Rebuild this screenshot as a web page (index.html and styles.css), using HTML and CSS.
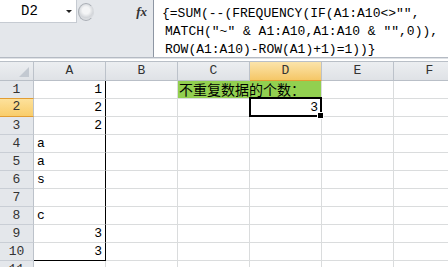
FILE: index.html
```html
<!DOCTYPE html>
<html lang="zh-CN">
<head>
    <meta charset="UTF-8">
    <title>不重复数据的个数</title>
    <link rel="stylesheet" href="styles.css">
</head>
<body>

    <div class="formula-bar">
        <div class="name-area">
            <div class="name-top">
                <div class="name-box">
                    <span class="name">D2</span>
                    <span class="arrow"></span>
                </div>
                <div class="knob"></div>
                <span class="fx">fx</span>
            </div>
        </div>
        <div class="formula">
            <div class="f-line first">{=SUM(--(FREQUENCY(IF(A1:A10&lt;&gt;"",</div>
            <div class="f-line">MATCH("~" &amp; A1:A10,A1:A10 &amp; "",0)),</div>
            <div class="f-line">ROW(A1:A10)-ROW(A1)+1)=1))}</div>
        </div>
    </div>
    <div class="strip"></div>

    <div class="sheet">
        <!-- 列标题 -->
        <div class="ch corner"><span class="tri"></span></div>
        <div class="ch">A</div>
        <div class="ch">B</div>
        <div class="ch">C</div>
        <div class="ch active">D</div>
        <div class="ch">E</div>
        <div class="ch">F</div>

        <div class="rh">1</div>
        <div class="c num edge">1</div>
        <div class="c"></div>
        <div class="c green">不重复数据的个数：</div>
        <div class="c"></div>
        <div class="c"></div>

        <div class="rh active">2</div>
        <div class="c num edge">2</div>
        <div class="c"></div>
        <div class="c"></div>
        <div class="c num current">3<span class="sel"><span class="handle"></span></span></div>
        <div class="c"></div>
        <div class="c"></div>

        <div class="rh">3</div>
        <div class="c num edge">2</div>
        <div class="c"></div>
        <div class="c"></div>
        <div class="c"></div>
        <div class="c"></div>
        <div class="c"></div>

        <div class="rh">4</div>
        <div class="c edge">a</div>
        <div class="c"></div>
        <div class="c"></div>
        <div class="c"></div>
        <div class="c"></div>
        <div class="c"></div>

        <div class="rh">5</div>
        <div class="c edge">a</div>
        <div class="c"></div>
        <div class="c"></div>
        <div class="c"></div>
        <div class="c"></div>
        <div class="c"></div>

        <div class="rh">6</div>
        <div class="c edge">s</div>
        <div class="c"></div>
        <div class="c"></div>
        <div class="c"></div>
        <div class="c"></div>
        <div class="c"></div>

        <div class="rh">7</div>
        <div class="c edge"></div>
        <div class="c"></div>
        <div class="c"></div>
        <div class="c"></div>
        <div class="c"></div>
        <div class="c"></div>

        <div class="rh">8</div>
        <div class="c edge">c</div>
        <div class="c"></div>
        <div class="c"></div>
        <div class="c"></div>
        <div class="c"></div>
        <div class="c"></div>

        <div class="rh">9</div>
        <div class="c num edge">3</div>
        <div class="c"></div>
        <div class="c"></div>
        <div class="c"></div>
        <div class="c"></div>
        <div class="c"></div>

        <div class="rh">10</div>
        <div class="c num edge last">3</div>
        <div class="c"></div>
        <div class="c"></div>
        <div class="c"></div>
        <div class="c"></div>
        <div class="c"></div>

        <div class="rh">11</div>
        <div class="c"></div>
        <div class="c"></div>
        <div class="c"></div>
        <div class="c"></div>
        <div class="c"></div>
        <div class="c"></div>
    </div>

</body>
</html>
```

FILE: styles.css
```css
body {
    margin: 0;
    width: 448px;
    height: 267px;
    overflow: hidden;
    background: #fff;
    font-family: "Liberation Mono", "Noto Sans CJK SC", monospace;
    font-size: 13px;
    color: #000;
}

/* 编辑栏 */
.formula-bar {
    display: flex;
    height: 57px;
    background: #e4e7eb;
    border-bottom: 1px solid #b4bac3;
}
.name-area {
    width: 153px;
    border-right: 1px solid #8d96a3;
}
.name-top {
    display: flex;
    align-items: center;
    height: 23px;
}
.name-box {
    display: flex;
    align-items: center;
    width: 76px;
    height: 22px;
    background: #fff;
    border-right: 1px solid #c6cbd2;
    border-bottom: 1px solid #c6cbd2;
}
.name {
    margin-left: 21px;
    width: 45px;
    font-size: 14px;
}
.arrow {
    width: 0;
    height: 0;
    border-left: 3px solid transparent;
    border-right: 3px solid transparent;
    border-top: 3px solid #222;
}
.knob {
    width: 14px;
    height: 16px;
    margin-left: 1px;
    border-radius: 50%;
    border: 1px solid #a9aeb5;
    border-right-color: transparent;
    background: radial-gradient(circle at 50% 40%, #f4f5f6 0 30%, #d3d6da 60%, #e9ebee 100%);
}
.fx {
    margin-left: auto;
    margin-right: 6px;
    font-family: "Liberation Serif", serif;
    font-style: italic;
    font-weight: bold;
    font-size: 13px;
    color: #333;
}
.formula {
    flex: 1;
    background: #fff;
    padding: 5px 0 0 8px;
    line-height: 18px;
    overflow: hidden;
}
.f-line {
    white-space: pre;
    padding-left: 3px;
}
.f-line.first {
    padding-left: 0;
}
.strip {
    height: 3px;
    background: #fff;
    border-top: 1px solid #dfe2e6;
    box-sizing: border-box;
}

/* 工作表 */
.sheet {
    display: grid;
    grid-template-columns: 34px repeat(6, 72px);
    grid-template-rows: 20px;
    grid-auto-rows: 18px;
}
.sheet > div {
    box-sizing: border-box;
    border-right: 1px solid #dadcdd;
    border-bottom: 1px solid #dadcdd;
    line-height: 17px;
    white-space: nowrap;
    overflow: hidden;
}
.sheet > .ch {
    background: linear-gradient(#eceef1, #dfe2e6);
    border-top: 1px solid #b9bfc7;
    border-right-color: #bcc2ca;
    border-bottom-color: #b9bfc7;
    text-align: center;
    line-height: 18px;
    color: #333;
}
.sheet > .ch.active {
    background: linear-gradient(#fbe4ab, #f5c767);
    border-bottom-color: #e29d32;
}
.corner {
    position: relative;
}
.tri {
    position: absolute;
    right: 4px;
    bottom: 3px;
    width: 0;
    height: 0;
    border-left: 10px solid transparent;
    border-bottom: 10px solid #c3c9d1;
}
.sheet > .rh {
    background: #e4e7eb;
    border-right-color: #bcc2ca;
    border-bottom-color: #c9ced5;
    text-align: center;
    color: #333;
}
.sheet > .rh.active {
    background: linear-gradient(#fde19b, #f9cd6a);
    border-top: 1px solid #e29d32;
    border-bottom-color: #e29d32;
    line-height: 16px;
    margin-top: -1px;
    height: 19px;
}
.c {
    padding: 0 3px;
}
.num {
    text-align: right;
}
.sheet > .edge {
    border-right-color: #000;
}
.sheet > .last {
    border-bottom-color: #000;
}
.sheet > .green {
    grid-column: span 2;
    background: #92d050;
    font-family: "Noto Sans CJK SC", sans-serif;
    font-size: 14px;
    line-height: 17px;
    padding-left: 1px;
    overflow: visible;
}
.sheet > .current {
    position: relative;
    overflow: visible;
}
.sel {
    position: absolute;
    left: -1px;
    top: -2px;
    right: -1px;
    bottom: -1px;
    border: 2px solid #000;
}
.handle {
    position: absolute;
    right: -4px;
    bottom: -4px;
    width: 5px;
    height: 5px;
    background: #000;
    border: 1px solid #fff;
}
```
